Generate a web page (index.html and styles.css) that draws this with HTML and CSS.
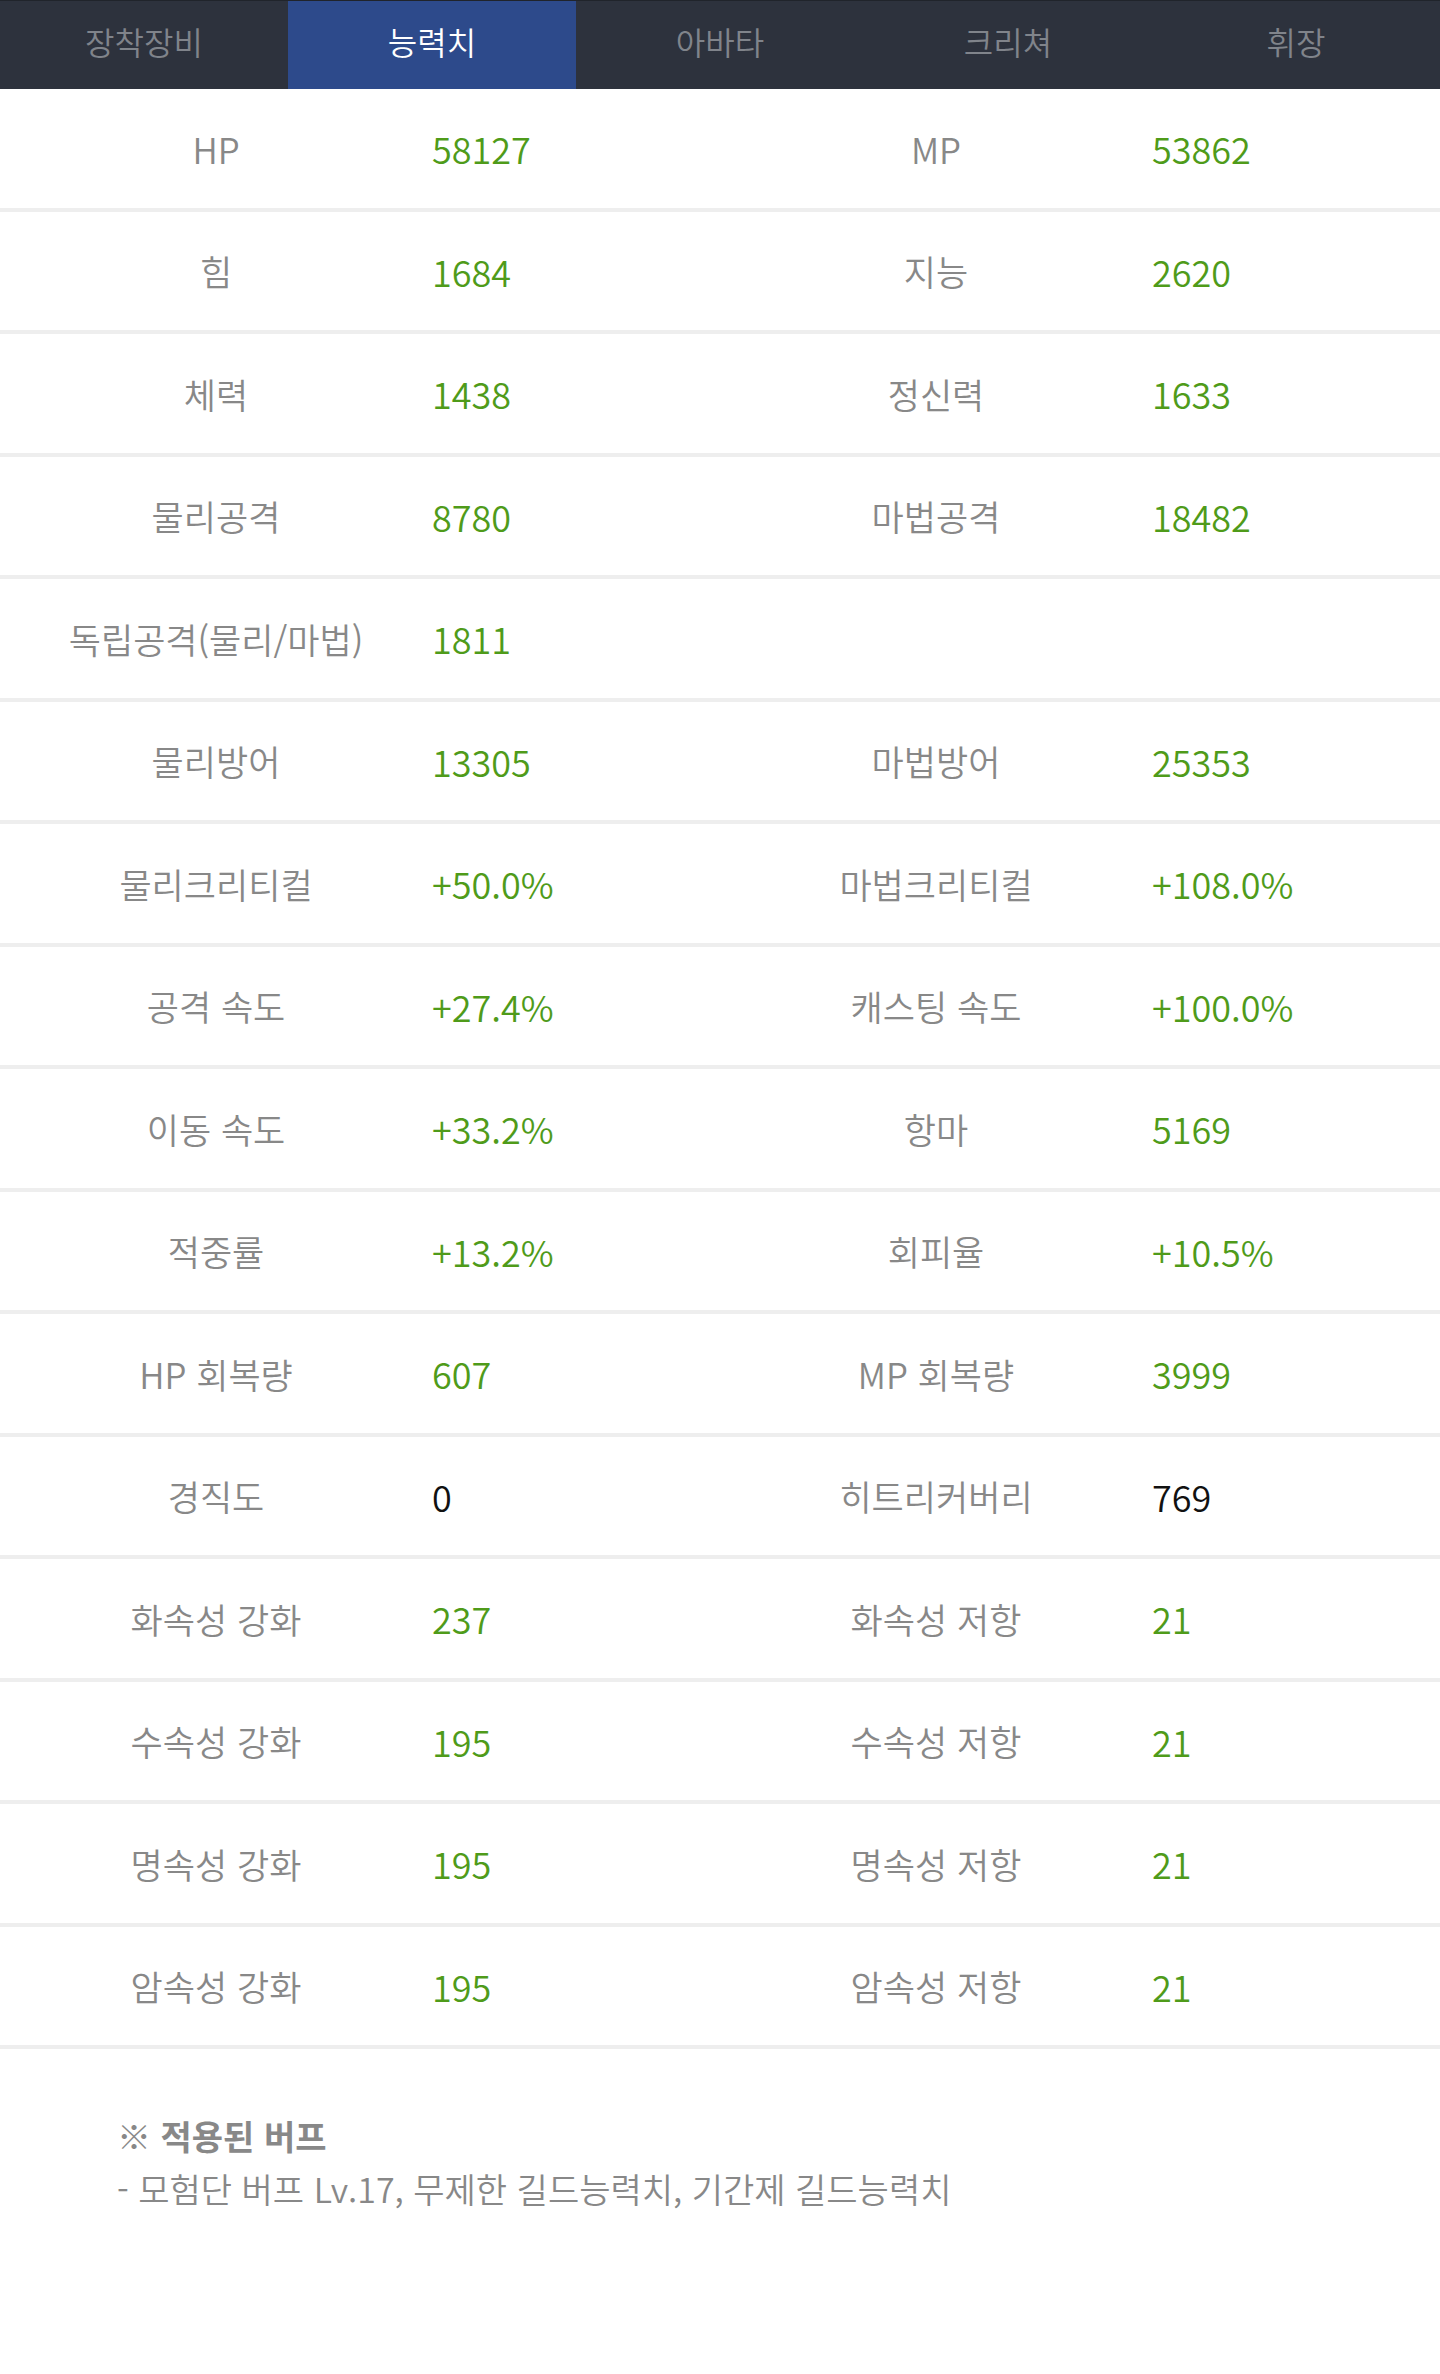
FILE: index.html
```html
<!DOCTYPE html>
<html lang="ko">
<head>
<meta charset="utf-8">
<title>능력치</title>
<link rel="stylesheet" href="styles.css">
</head>
<body>
<nav class="tabs">
  <a class="tab">장착장비</a>
  <a class="tab active">능력치</a>
  <a class="tab">아바타</a>
  <a class="tab">크리쳐</a>
  <a class="tab">휘장</a>
</nav>
<section class="stats">
  <div class="row"><span class="label">HP</span><span class="value">58127</span><span class="label">MP</span><span class="value">53862</span></div>
  <div class="row"><span class="label">힘</span><span class="value">1684</span><span class="label">지능</span><span class="value">2620</span></div>
  <div class="row"><span class="label">체력</span><span class="value">1438</span><span class="label">정신력</span><span class="value">1633</span></div>
  <div class="row"><span class="label">물리공격</span><span class="value">8780</span><span class="label">마법공격</span><span class="value">18482</span></div>
  <div class="row"><span class="label">독립공격(물리/마법)</span><span class="value">1811</span><span class="label"></span><span class="value"></span></div>
  <div class="row"><span class="label">물리방어</span><span class="value">13305</span><span class="label">마법방어</span><span class="value">25353</span></div>
  <div class="row"><span class="label">물리크리티컬</span><span class="value">+50.0%</span><span class="label">마법크리티컬</span><span class="value">+108.0%</span></div>
  <div class="row"><span class="label">공격 속도</span><span class="value">+27.4%</span><span class="label">캐스팅 속도</span><span class="value">+100.0%</span></div>
  <div class="row"><span class="label">이동 속도</span><span class="value">+33.2%</span><span class="label">항마</span><span class="value">5169</span></div>
  <div class="row"><span class="label">적중률</span><span class="value">+13.2%</span><span class="label">회피율</span><span class="value">+10.5%</span></div>
  <div class="row"><span class="label">HP 회복량</span><span class="value">607</span><span class="label">MP 회복량</span><span class="value">3999</span></div>
  <div class="row"><span class="label">경직도</span><span class="value plain">0</span><span class="label">히트리커버리</span><span class="value plain">769</span></div>
  <div class="row"><span class="label">화속성 강화</span><span class="value">237</span><span class="label">화속성 저항</span><span class="value">21</span></div>
  <div class="row"><span class="label">수속성 강화</span><span class="value">195</span><span class="label">수속성 저항</span><span class="value">21</span></div>
  <div class="row"><span class="label">명속성 강화</span><span class="value">195</span><span class="label">명속성 저항</span><span class="value">21</span></div>
  <div class="row"><span class="label">암속성 강화</span><span class="value">195</span><span class="label">암속성 저항</span><span class="value">21</span></div>
</section>
<section class="note">
  <p class="note-title">※ 적용된 버프</p>
  <p class="note-text">- 모험단 버프 Lv.17, 무제한 길드능력치, 기간제 길드능력치</p>
</section>
</body>
</html>
```

FILE: styles.css
```css
html, body {
  margin: 0;
  padding: 0;
  background: #ffffff;
}

body {
  font-family: "Noto Sans CJK KR", "Noto Sans", sans-serif;
  font-weight: 350;
  width: 1440px;
  min-height: 2374px;
}

.tabs {
  display: grid;
  grid-template-columns: repeat(5, 1fr);
  height: 89px;
  background: #2d323d;
  border-top: 1px solid #20242b;
  box-sizing: border-box;
}

.tab {
  display: flex;
  align-items: center;
  justify-content: center;
  padding-bottom: 8px;
  font-size: 32px;
  color: #80848b;
  text-decoration: none;
}

.tab.active {
  background: #2d4a8b;
  color: #ffffff;
}

.stats {
  display: flex;
  flex-direction: column;
}

.row {
  display: grid;
  grid-template-columns: 30% 20% 30% 20%;
  align-items: center;
  height: 122.5px;
  border-bottom: 4px solid #eeeeee;
  box-sizing: border-box;
  font-size: 35px;
}

.label {
  text-align: center;
  color: #888888;
}

.value {
  color: #4f9b1a;
  font-size: 36px;
}

.value.plain {
  color: #111111;
}

.note {
  padding: 60px 0 0 117px;
  color: #888888;
  font-size: 34px;
  line-height: 53px;
}

.note p {
  margin: 0;
}

.note-title {
  font-weight: 700;
}
```
